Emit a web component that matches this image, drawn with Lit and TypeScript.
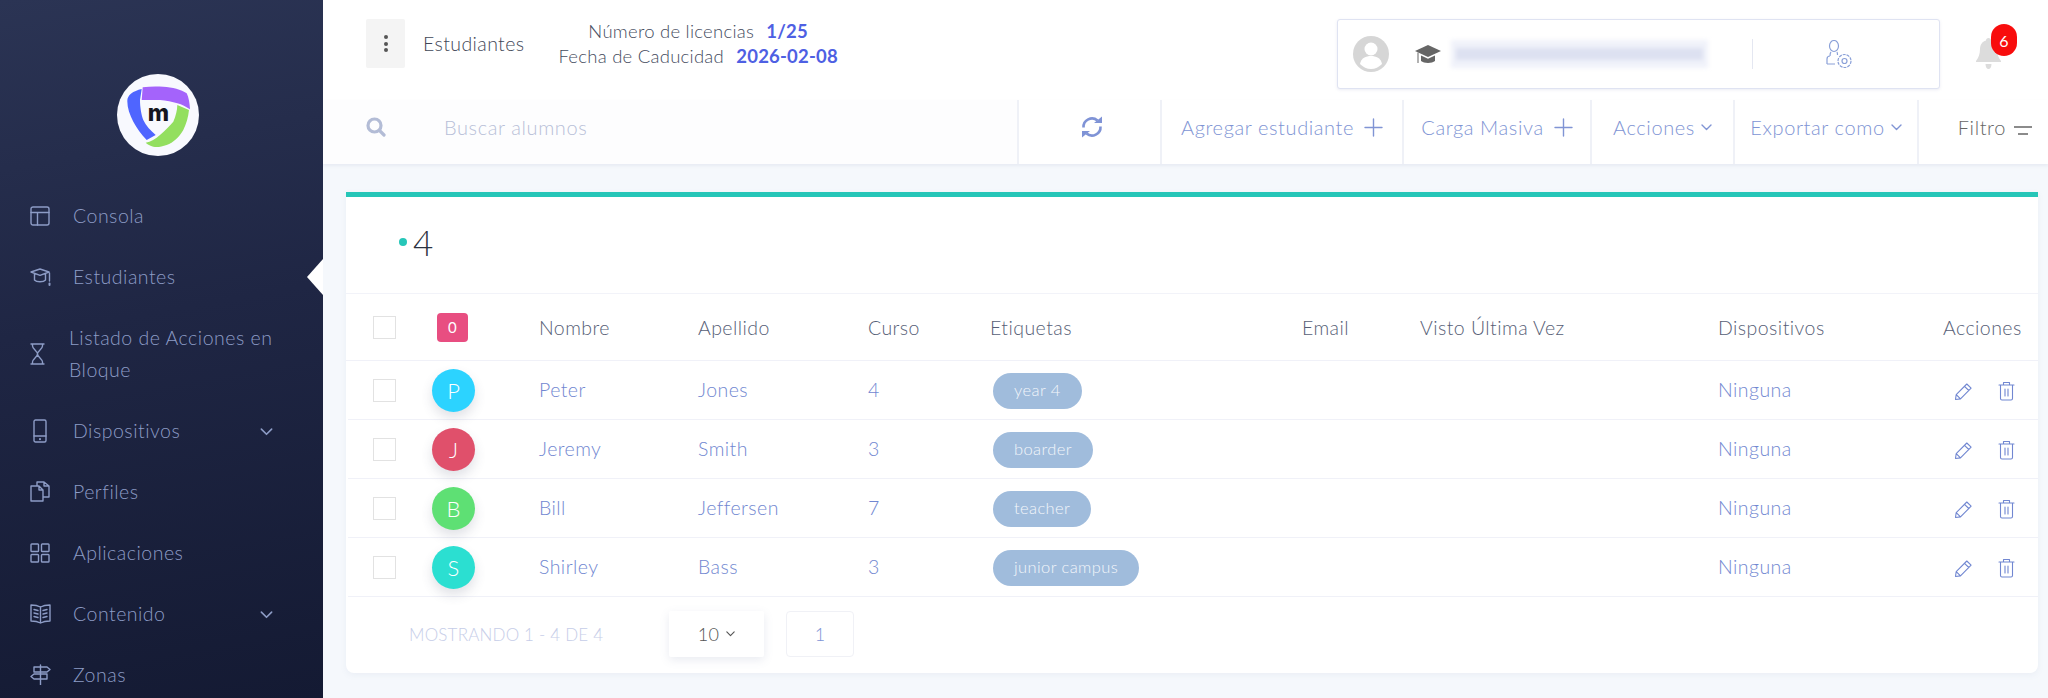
import { LitElement, html, css, svg } from "lit";
import { customElement } from "lit/decorators.js";

const icon = (w: number, h: number, box: string, body: unknown, cls = "") => html`
  <svg class="ico ${cls}" width=${w} height=${h} viewBox=${box} fill="none" stroke="currentColor" stroke-width="1.4" stroke-linecap="round" stroke-linejoin="round">${body}</svg>
`;

const menuIcons: Record<string, unknown> = {
  console: icon(20, 20, "0 0 20 20", svg`<rect x="1" y="1" width="18" height="18" rx="2"/><path d="M1 6.5h18M7.5 6.5V19"/>`),
  cap: icon(21, 20, "0 0 21 20", svg`<path d="M1 5 10 2l9 3-9 3.4zM4.5 7v6c2 2.4 9 2.4 11 0V7M19.5 6v8"/><path d="M19.5 16.5v1.5" stroke-width="2"/>`),
  hourglass: icon(15, 22, "0 0 15 22", svg`<path d="M1 1h13M1 21h13M2.5 1v2c0 3 5 5 5 8s-5 5-5 8v2M12.5 1v2c0 3-5 5-5 8s5 5 5 8v2"/>`),
  tablet: icon(14, 24, "0 0 14 24", svg`<rect x="1" y="1" width="12" height="22" rx="1.5"/><path d="M1 17h12"/><path d="M7 20v.2" stroke-width="2"/>`),
  files: icon(21, 21, "0 0 21 21", svg`<path d="M1 5h8l4 4v11H1zM9 5v4h4M7 5V1h7l5 4v11h-6M14 1v4h5"/>`),
  grid: icon(20, 20, "0 0 20 20", svg`<rect x="1" y="1" width="7.5" height="7.5" rx=".8"/><rect x="11.5" y="1" width="7.5" height="7.5" rx=".8"/><rect x="1" y="11.5" width="7.5" height="7.5" rx=".8"/><rect x="11.5" y="11.5" width="7.5" height="7.5" rx=".8"/>`),
  book: icon(21, 21, "0 0 21 21", svg`<path d="M1 2c4 0 7 .6 9.5 2C13 2.600 16 2 20 2v16c-4 0-7 .6-9.500 2C8 18.600 5 18 1 18zM10.500 4v16M4 6.500l4 1M4 10l4 1M4 13.500l4 1M17 6.500l-4 1M17 10l-4 1M17 13.500l-4 1"/>`),
  sign: icon(21, 21, "0 0 21 21", svg`<path d="M10.500 1v20M4 3h13l3 2.500L17 8H4zM17 10H4l-3 2.500L4 15h13z"/>`),
};

const chevron = (w = 11, h = 7) => icon(w, h, "0 0 11 7", svg`<path d="M1 1l4.500 4.500L10 1"/>`, "chev");
const plus = icon(19, 19, "0 0 19 19", svg`<path d="M9.500 1v17M1 9.500h17"/>`);

const pencil = icon(19, 19, "0 0 19 19", svg`<path stroke-width="1.100" d="M1.500 17.500l.7-4.800L12.800 2l4.300 4.200L6.500 16.900zM2.200 12.700l4.300 4.200M10.500 4.300l4.300 4.200"/>`);
const trash = icon(17, 20, "0 0 17 20", svg`<path stroke-width="1.100" d="M1 4h15M2.500 4v13.500a1.500 1.500 0 0 0 1.500 1.500h9a1.500 1.500 0 0 0 1.500-1.500V4M5.500 4V1.500h6V4M7 8v7M10 8v7"/>`);

const students = [
  { first: "Peter", last: "Jones", course: "4", tag: "year 4", color: "#2cd3ff" },
  { first: "Jeremy", last: "Smith", course: "3", tag: "boarder", color: "#e0506b" },
  { first: "Bill", last: "Jeffersen", course: "7", tag: "teacher", color: "#5ee074" },
  { first: "Shirley", last: "Bass", course: "3", tag: "junior campus", color: "#2bdfd1" },
];

const menu = [
  { label: "Consola", icon: "console" },
  { label: "Estudiantes", icon: "cap", active: true },
  { label: "Listado de Acciones en Bloque", icon: "hourglass", tall: true },
  { label: "Dispositivos", icon: "tablet", sub: true },
  { label: "Perfiles", icon: "files" },
  { label: "Aplicaciones", icon: "grid" },
  { label: "Contenido", icon: "book", sub: true },
  { label: "Zonas", icon: "sign" },
];

@customElement("app-root")
export class AppRoot extends LitElement {
  static styles = css`
    :host {
      display: block;
      font-family: "Lato", "Noto Sans", sans-serif;
      font-weight: 300;
    }
    * { box-sizing: border-box; }
    .ico { display: block; flex: none; }

    .page {
      display: flex;
      height: 698px;
      overflow: hidden;
      background: #f5f8fc;
    }

    .side {
      position: relative;
      flex: none;
      width: 323px;
      background: linear-gradient(170deg, #2b3454 0%, #1f2644 45%, #141a33 100%);
      color: #8d9cc6;
    }
    .logo {
      display: flex;
      justify-content: center;
      padding-top: 74px;
      height: 185px;
      padding-right: 7px;
    }
    .item {
      position: relative;
      display: flex;
      align-items: center;
      height: 61px;
      padding-left: 30px;
      font-size: 19.5px;
      letter-spacing: 0.5px;
    }
    .item.tall { height: 93px; }
    .item.tall .icon-box { justify-content: flex-start; }
    .item.tall .label { margin-left: 19px; width: 240px; line-height: 32px; }
    .icon-box { width: 20px; display: flex; justify-content: center; }
    .label { margin-left: 23px; }
    .item .chev { position: absolute; left: 260px; top: 28px; }
    .arrow {
      position: absolute;
      right: 0;
      top: 13px;
      width: 16px;
      height: 36px;
      background: #fff;
      clip-path: polygon(100% 0, 100% 100%, 0 50%);
    }

    .main { flex: 1; min-width: 0; display: flex; flex-direction: column; }

    .top {
      display: flex;
      align-items: flex-start;
      height: 100px;
      background: #fff;
      padding: 19px 0 0 43px;
    }
    .kebab {
      width: 39px;
      height: 49px;
      background: #f4f4f4;
      border-radius: 2px;
      display: flex;
      flex-direction: column;
      align-items: center;
      justify-content: center;
      gap: 2.5px;
    }
    .kebab i { width: 4px; height: 4px; border-radius: 50%; background: #555; }
    .page-title {
      margin-left: 18px;
      line-height: 49px;
      font-size: 19.5px;
      color: #3f4757;
      letter-spacing: 0.4px;
    }
    .licence {
      margin: 0 0 0 34px;
      font-size: 18.500px;
      line-height: 25px;
      text-align: center;
      color: #454c5e;
      letter-spacing: 0.25px;
    }
    .licence b { margin-left: 7px; color: #4e60e3; font-weight: 700; letter-spacing: 0.2px; }

    .profile {
      display: flex;
      align-items: center;
      margin-left: auto;
      width: 603px;
      height: 70px;
      padding-left: 15px;
      border: 1px solid #dfe3f2;
      border-radius: 3px;
      background: #fff;
      box-shadow: 0 1px 3px rgba(120, 130, 180, 0.15);
    }
    .who { width: 36px; height: 36px; flex: none; }
    .grad { margin-left: 26px; color: #666; }
    .blur {
      display: flex;
      align-items: center;
      width: 257px;
      height: 28px;
      margin-left: 10px;
      background: #f0f2fa;
      filter: blur(2px);
    }
    .blur i { display: block; width: 100%; height: 12px; margin: 0 5px; background: #dde1f1; }
    .rule { width: 1px; height: 30px; margin-left: 44px; background: #e4e7f1; }
    .gear { margin-left: 72px; color: #8aa0d8; }

    .bell { position: relative; margin: 19px 0 0 36px; width: 72px; color: #dcdcdc; }
    .badge {
      position: absolute;
      left: 15px;
      top: -14px;
      width: 26px;
      height: 32px;
      border-radius: 13px;
      background: #f80d0d;
      color: #fff;
      font-size: 16px;
      font-weight: 400;
      display: flex;
      align-items: center;
      justify-content: center;
    }

    .tools {
      display: flex;
      height: 64px;
      background: #fff;
      box-shadow: 0 2px 3px rgba(120, 130, 170, 0.1);
      color: #8094d4;
      font-size: 20px;
      letter-spacing: 0.6px;
    }
    .cell {
      display: flex;
      align-items: center;
      justify-content: center;
      gap: 10px;
      padding-bottom: 10px;
      border-right: 2px solid #eff1f7;
      flex: none;
    }
    .search {
      width: 696px;
      justify-content: flex-start;
      gap: 0;
      padding-left: 43px;
      color: #b9c0d8;
      background: #fdfdfe;
    }
    .search span { margin-left: 58px; color: #b8bfd8; }
    .search svg { color: #b3bcd6; }
    .refresh { width: 143px; padding-left: 5px; }
    .add { width: 242px; }
    .bulk { width: 188px; }
    .acciones { width: 143px; gap: 6px; }
    .export { width: 184px; gap: 6px; }
    .filter {
      border: 0;
      flex: 1;
      gap: 8px;
      color: #666;
      padding: 0 16px 10px 0;
      justify-content: flex-end;
    }
    .filter svg { margin-top: 8px; }

    .content { padding: 28px 10px 0 23px; }
    .card {
      height: 481px;
      background: #fff;
      border-top: 5px solid #26c6b8;
      border-radius: 0 0 8px 8px;
      box-shadow: 0 2px 6px rgba(120, 130, 170, 0.08);
    }
    .count {
      display: flex;
      align-items: center;
      height: 97px;
      padding: 0 0 6px 53px;
      border-bottom: 1.500px solid #f2f3f9;
      font-size: 35px;
      color: #2b3240;
    }
    .count i {
      width: 8px;
      height: 8px;
      margin-right: 6px;
      border-radius: 50%;
      background: #26c6b8;
    }

    .row {
      display: grid;
      grid-template-columns: 59px 107px 159px 170px 122px 312px 118px 298px 225px 1fr;
      align-items: center;
      padding-left: 25.500px;
      height: 59px;
      margin-left: 1.500px;
      border-bottom: 1.500px solid #f0f1f8;
      font-size: 19.500px;
      letter-spacing: 0.45px;
      color: #7187d1;
    }
    .row.head { height: 67px; margin-left: 0; padding-left: 27px; color: #565e76; }
    .txt { padding-bottom: 2px; }
    .check {
      width: 23px;
      height: 23px;
      border: 1.500px solid #e2e2e2;
      background: #fff;
    }
    .zero {
      width: 31px;
      height: 29px;
      margin-left: 5px;
      border-radius: 4px;
      background: #e84e81;
      color: #fff;
      font-size: 15px;
      font-weight: 400;
      display: flex;
      align-items: center;
      justify-content: center;
    }
    .avatar {
      width: 43px;
      height: 43px;
      border-radius: 50%;
      color: #fff;
      font-size: 22px;
      letter-spacing: 0;
      display: flex;
      align-items: center;
      justify-content: center;
      box-shadow: 0 6px 12px rgba(60, 70, 100, 0.16);
    }
    .tag-cell { display: flex; padding-top: 2px; }
    .tag {
      display: inline-block;
      margin-left: 3px;
      height: 36px;
      padding: 0 21px;
      line-height: 35px;
      border-radius: 18px;
      background: #a0bcdc;
      color: #f3f6fb;
      font-size: 16.500px;
      letter-spacing: 0.4px;
    }
    .acts { display: flex; align-items: center; gap: 25px; margin-left: 11px; padding-top: 2px; }

    .foot {
      display: flex;
      align-items: center;
      height: 78px;
      padding: 0 0 4px 63px;
      font-size: 17px;
      letter-spacing: 0.2px;
      color: #c6cde8;
    }
    .total { width: 260px; }
    .size {
      display: flex;
      align-items: center;
      justify-content: center;
      gap: 7px;
      width: 95px;
      height: 46px;
      border-radius: 2px;
      background: #fff;
      box-shadow: 0 3px 10px rgba(120, 130, 170, 0.16);
      color: #555;
      font-size: 18px;
    }
    .num {
      display: flex;
      align-items: center;
      justify-content: center;
      width: 68px;
      height: 46px;
      margin-left: 22px;
      border: 1.500px solid #f0f1f6;
      border-radius: 4px;
      color: #8094d6;
      font-size: 18px;
    }
  `;

  renderLogo() {
    return html`
      <svg width="82" height="82" viewBox="0 0 82 82">
        <circle cx="41" cy="41" r="41" fill="#f8f9fe"/>
        <path fill="#4f65ff" d="M24.700 15C16 17 10.300 21 10.300 27c0 7 2.500 14 6 20.700 3.500 6.500 8 13 13.400 18.300l9-5c-5-4.500-10-9.500-12.400-15-2-5-3.300-13-3.300-20z"/>
        <path fill="#a463fb" d="M25.700 13.300c7-1 14-1 20.600-.6 9 .6 18 2.600 23.400 6.600 2 4 3 10 3.300 16-4-2.600-8-4.700-12.700-6-5-1.500-11-3-17.300-3.300H24.700z"/>
        <path fill="#93df5f" d="M60.300 31l11.700 5c-.7 7-2.700 14-5.700 20-4 7-10 12.700-16.600 15-5 1.800-9.700 2.500-13.400 1.700-3-.7-6-2.500-7.600-4 5-1 10-3.700 14.300-7.700 5.500-4.800 10-9.500 13.300-13.300 2.500-5.700 4-11.700 4-16.700z"/>
        <text x="41.300" y="47" text-anchor="middle" font-family="Inter, sans-serif" font-weight="800" font-size="23" fill="#15151f">m</text>
      </svg>
    `;
  }

  renderSide() {
    return html`
      <nav class="side">
        <div class="logo">${this.renderLogo()}</div>
        ${menu.map(m => html`
          <div class="item ${m.tall ? "tall" : ""}">
            <span class="icon-box">${menuIcons[m.icon]}</span>
            <span class="label">${m.label}</span>
            ${m.sub ? chevron(13, 8) : ""}
            ${m.active ? html`<span class="arrow"></span>` : ""}
          </div>
        `)}
      </nav>
    `;
  }

  renderTop() {
    return html`
      <header class="top">
        <div class="kebab"><i></i><i></i><i></i></div>
        <div class="page-title">Estudiantes</div>
        <div class="licence">
          <div>Número de licencias <b>1/25</b></div>
          <div>Fecha de Caducidad <b>2026-02-08</b></div>
        </div>
        <div class="profile">
          <svg class="who" viewBox="0 0 36 36">
            <circle cx="18" cy="18" r="18" fill="#d6d6d6"/>
            <circle cx="18" cy="13" r="6.500" fill="#fff"/>
            <path fill="#fff" d="M7 28c1-6 6-8 11-8s10 2 11 8c-3 3-7 5-11 5s-8-2-11-5z"/>
          </svg>
          <svg class="ico grad" width="26" height="24" viewBox="0 0 26 24" fill="currentColor">
            <path d="M13 3 0 9l13 6 13-6z"/>
            <path d="M6 13.500V19c3 2.500 11 2.500 14 0v-5.500l-7 3.200z"/>
            <path d="M2.500 10.500h1V21h-1z"/>
          </svg>
          <div class="blur"><i></i></div>
          <div class="rule"></div>
          <svg class="ico gear" width="27" height="29" viewBox="0 0 27 29" fill="none" stroke="currentColor" stroke-width="1.200">
            <ellipse cx="9" cy="6" rx="4.500" ry="5.500"/>
            <path d="M6 12c-1 1-1 2-1 4M12 12c.5 1 .5 1.500.5 3M2 24v-5c0-2 1-3 3-3M2 24h8"/>
            <circle cx="19.500" cy="21" r="6.500" stroke-dasharray="3 1"/>
            <circle cx="19.500" cy="21" r="2.500"/>
          </svg>
        </div>
        <div class="bell">
          <svg class="ico" width="25" height="31" viewBox="0 0 25 31" fill="currentColor">
            <path d="M12.500 0c1.500 0 2.500 1 2.500 2.500 4 1 6 4.500 6 8.500 0 5 1.500 9 4 12v1H0v-1c2.500-3 4-7 4-12 0-4 2-7.500 6-8.500C10 1 11 0 12.500 0z"/>
            <path d="M9.500 26h6c0 3-1.300 5-3 5s-3-2-3-5z"/>
          </svg>
          <span class="badge">6</span>
        </div>
      </header>
    `;
  }

  renderTools() {
    return html`
      <div class="tools">
        <div class="cell search">
          <svg class="ico" width="20" height="20" viewBox="0 0 20 20" fill="none" stroke="currentColor" stroke-width="3.200" stroke-linecap="round">
            <circle cx="8.500" cy="8.500" r="6.500"/><path d="M13.500 13.500 18 18"/>
          </svg>
          <span>Buscar alumnos</span>
        </div>
        <div class="cell refresh">
          <svg class="ico" width="24" height="24" viewBox="0 0 24 24" fill="none" stroke="#7f93d6" stroke-width="2.600">
            <path d="M3.500 12.500A8.500 8.500 0 0 1 17.500 5.500"/>
            <path d="M20.500 11.500A8.500 8.500 0 0 1 6.500 18.500"/>
            <path d="M14 8h8V1.500zM10 16H2v6.500z" fill="#7f93d6" stroke="none"/>
          </svg>
        </div>
        <div class="cell add">Agregar estudiante ${plus}</div>
        <div class="cell bulk">Carga Masiva ${plus}</div>
        <div class="cell acciones">Acciones ${chevron()}</div>
        <div class="cell export">Exportar como ${chevron()}</div>
        <div class="cell filter">
          Filtro
          <svg class="ico" width="18" height="12" viewBox="0 0 18 12" stroke="#666" stroke-width="1.500">
            <path d="M0 2h18M4 9h10"/>
          </svg>
        </div>
      </div>
    `;
  }

  renderTable() {
    return html`
      <div class="row head">
        <span class="check"></span>
        <span class="zero">0</span>
        <span>Nombre</span>
        <span>Apellido</span>
        <span>Curso</span>
        <span>Etiquetas</span>
        <span>Email</span>
        <span>Visto Última Vez</span>
        <span>Dispositivos</span>
        <span>Acciones</span>
      </div>
      ${students.map(s => html`
        <div class="row">
          <span class="check"></span>
          <span class="avatar" style="background:${s.color}">${s.first[0]}</span>
          <span class="txt">${s.first}</span>
          <span class="txt">${s.last}</span>
          <span class="txt">${s.course}</span>
          <span class="tag-cell"><span class="tag">${s.tag}</span></span>
          <span></span>
          <span></span>
          <span class="txt">Ninguna</span>
          <span class="acts">${pencil}${trash}</span>
        </div>
      `)}
    `;
  }

  render() {
    return html`
      <div class="page">
        ${this.renderSide()}
        <div class="main">
          ${this.renderTop()}
          ${this.renderTools()}
          <div class="content">
            <section class="card">
              <div class="count"><i></i>4</div>
              ${this.renderTable()}
              <div class="foot">
                <span class="total">MOSTRANDO 1 - 4 DE 4</span>
                <span class="size">10 ${chevron(9, 6)}</span>
                <span class="num">1</span>
              </div>
            </section>
          </div>
        </div>
      </div>
    `;
  }
}
